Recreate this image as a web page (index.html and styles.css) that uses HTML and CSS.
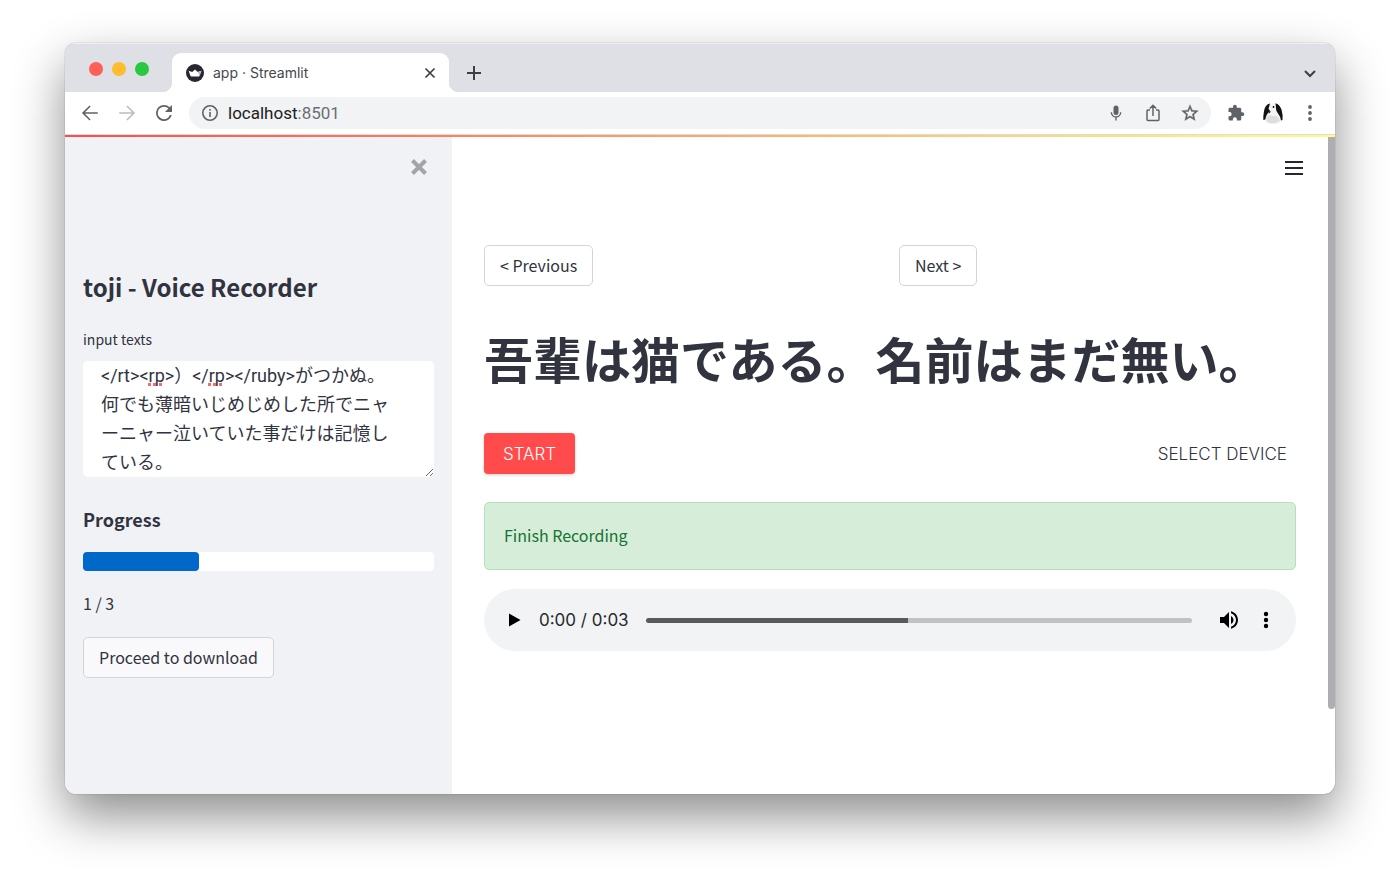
FILE: index.html
```html
<!DOCTYPE html>
<html lang="ja">
<head>
  <meta charset="UTF-8">
  <meta name="viewport" content="width=device-width, initial-scale=1.0">
  <title>app · Streamlit</title>
  <link rel="stylesheet" href="styles.css">
</head>
<body>
  <div class="window">
    <!-- Tab strip -->
    <div class="tab-strip">
      <div class="lights">
        <button class="light red" aria-label="Close window"></button>
        <button class="light yellow" aria-label="Minimize"></button>
        <button class="light green" aria-label="Zoom"></button>
      </div>
      <div class="tab">
        <svg class="favicon" viewBox="0 0 18 18"><circle cx="9" cy="9" r="9" fill="#262730"/><path d="M2.600 6.800 6.200 8 9 5.500l2.800 2.500 3.600-1.200-1.800 5q-.2.600-.8.600H5.200q-.6 0-.8-.6z" fill="#fff"/><path d="M11.800 8l3.600-1.200-1.800 5z" fill="#bbb"/></svg>
        <span class="tab-title">app · Streamlit</span>
        <button class="icon-btn" aria-label="Close tab">
          <svg width="20" height="20" viewBox="0 0 20 20" fill="none" stroke="#3c4043" stroke-width="1.700"><path d="M5.500 5.500l9 9M14.500 5.500l-9 9"/></svg>
        </button>
      </div>
      <button class="icon-btn new-tab" aria-label="New tab">
        <svg width="20" height="20" viewBox="0 0 20 20" fill="none" stroke="#3c4043" stroke-width="2"><path d="M10 3v14M3 10h14"/></svg>
      </button>
      <button class="icon-btn tab-search" aria-label="Search tabs">
        <svg width="20" height="20" viewBox="0 0 20 20" fill="none" stroke="#3c4043" stroke-width="2"><path d="M5 8l5 5 5-5"/></svg>
      </button>
    </div>

    <!-- Toolbar -->
    <div class="toolbar">
      <div class="icons">
        <button class="icon-btn" aria-label="Back"><svg width="22" height="22" viewBox="0 0 24 24" fill="#5f6368"><path d="M20.500 11.100H6.500l6.200-6.200L11.500 3.700 3.200 12l8.300 8.300 1.200-1.200-6.200-6.200h14z"/></svg></button>
        <button class="icon-btn" aria-label="Forward"><svg width="22" height="22" viewBox="0 0 24 24" fill="#babcbe"><path d="M3.500 11.100h14l-6.200-6.200 1.200-1.200 8.300 8.300-8.300 8.300-1.200-1.200 6.200-6.200h-14z"/></svg></button>
        <button class="icon-btn" aria-label="Reload"><svg width="24" height="24" viewBox="0 0 24 24" fill="#5f6368"><path d="M17.650 6.350A7.960 7.960 0 0 0 12 4a8 8 0 1 0 7.730 10h-1.900A6.200 6.200 0 1 1 12 5.800c1.700 0 3.300.7 4.400 1.800L13 11h7V4z"/></svg></button>
      </div>
      <div class="address">
        <svg class="info" width="18" height="18" viewBox="0 0 18 18" fill="none" stroke="#5f6368" stroke-width="1.600"><circle cx="9" cy="9" r="7.200"/><path d="M9 8v5M9 5v1.800"/></svg>
        <span class="url">localhost<span class="port">:8501</span></span>
        <div class="icons">
          <button class="icon-btn" aria-label="Microphone"><svg width="18" height="18" viewBox="0 0 18 18" fill="#5f6368"><rect x="6.500" y="1.500" width="5" height="9.500" rx="2.500"/><path d="M4.300 8.300a4.700 4.700 0 0 0 9.400 0M9 13v3.500" fill="none" stroke="#5f6368" stroke-width="1.400"/></svg></button>
          <button class="icon-btn" aria-label="Share"><svg width="20" height="20" viewBox="0 0 20 20" fill="none" stroke="#5f6368" stroke-width="1.500"><path d="M7 7H5q-1 0-1 1v8.500q0 1 1 1h10q1 0 1-1V8q0-1-1-1h-2M10 13V2.500M6.800 5.500L10 2.300l3.200 3.200"/></svg></button>
          <button class="icon-btn" aria-label="Bookmark"><svg width="20" height="20" viewBox="0 0 24 24" fill="#5f6368" stroke="#5f6368" stroke-width=".4"><path d="M22 9.240l-7.190-.620L12 2 9.190 8.630 2 9.240l5.460 4.730L5.820 21 12 17.270 18.180 21l-1.630-7.030zM12 15.400l-3.760 2.270 1-4.280-3.320-2.880 4.380-.380L12 6.100l1.710 4.040 4.380.380-3.320 2.880 1 4.280z"/></svg></button>
        </div>
      </div>
      <div class="icons">
        <button class="icon-btn" aria-label="Extensions"><svg width="18" height="18" viewBox="0 0 24 24" fill="#5f6368"><path d="M20.500 11H19V7c0-1.100-.9-2-2-2h-4V3.500a2.500 2.500 0 0 0-5 0V5H4c-1.100 0-2 .9-2 2v3.800h1.500a2.700 2.700 0 0 1 0 5.400H2V20c0 1.100.9 2 2 2h3.800v-1.500a2.700 2.700 0 0 1 5.400 0V22H17c1.100 0 2-.9 2-2v-4h1.500a2.500 2.500 0 0 0 0-5z"/></svg></button>
        <button class="icon-btn" aria-label="Profile">
          <svg width="22" height="22" viewBox="0 0 22 22"><path d="M5 3q6-4 12 1 4 5 3 14l-3 3Q10 24 4 20q-3-2-2-8 1-6 3-9z" fill="#f3f3f3"/><path d="M8 1.500Q3 2.500 2 9q-1 6-.7 9l2-.5Q3.500 14 6 11l2-2.500L6.500 7z" fill="#111"/><path d="M13.500 1.200q4 1 6 6.300 1.500 5 1 10.500l-1.500.5q-.5-4-3-7-2-2-2-5z" fill="#111"/><path d="M4 15q3-3 7-1 5-1 7 5-6 4-13 1z" fill="#ddd"/><circle cx="11.500" cy="5" r=".9" fill="#111"/><path d="M6 9l3 .5-2 2z" fill="#111"/></svg>
        </button>
        <button class="icon-btn" aria-label="Menu"><svg width="20" height="20" viewBox="0 0 20 20" fill="#5f6368"><circle cx="10" cy="4" r="1.900"/><circle cx="10" cy="10" r="1.900"/><circle cx="10" cy="16" r="1.900"/></svg></button>
      </div>
    </div>

    <!-- Streamlit app -->
    <div class="app">
      <aside class="sidebar">
        <button class="icon-btn close-sidebar" aria-label="Close sidebar">
          <svg width="18" height="18" viewBox="0 0 18 18" fill="none" stroke="#a3a4a9" stroke-width="4"><path d="M2.500 2.500l13 13M15.500 2.500l-13 13"/></svg>
        </button>
        <h1>toji - Voice Recorder</h1>
        <label for="texts">input texts</label>
        <div class="text-box">
          <textarea id="texts" rows="4" spellcheck="false">&lt;/rt&gt;&lt;rp&gt;）&lt;/rp&gt;&lt;/ruby&gt;がつかぬ。
何でも薄暗いじめじめした所でニャーニャー泣いていた事だけは記憶している。</textarea>
          <span class="misspelled first"></span>
          <span class="misspelled second"></span>
        </div>
        <h2 id="progress-title">Progress</h2>
        <progress value="33" max="100" aria-labelledby="progress-title"></progress>
        <p class="count">1 / 3</p>
        <button class="btn">Proceed to download</button>
      </aside>

      <main class="main">
        <button class="icon-btn main-menu" aria-label="Main menu">
          <svg width="18" height="16" viewBox="0 0 18 16" stroke="#262730" stroke-width="2"><path d="M0 2h18M0 8h18M0 14h18"/></svg>
        </button>
        <div class="pager">
          <div><button class="btn">&lt; Previous</button></div>
          <div><button class="btn">Next &gt;</button></div>
        </div>
        <p class="sentence">吾輩は猫である。名前はまだ無い。</p>
        <div class="recorder">
          <button class="start">START</button>
          <button class="device">SELECT DEVICE</button>
        </div>
        <div class="success" role="status">Finish Recording</div>
        <div class="player">
          <button class="icon-btn play" aria-label="Play"><svg width="20" height="20" viewBox="0 0 20 20"><path d="M5 3.500v13L16.500 10z"/></svg></button>
          <span class="time">0:00 / 0:03</span>
          <input class="seek" type="range" min="0" max="100" value="48" aria-label="Seek">
          <button class="icon-btn" aria-label="Mute"><svg width="24" height="24" viewBox="0 0 24 24"><path d="M3 9v6h4l5 5V4L7 9zm13.500 3c0-1.770-1.020-3.290-2.500-4.030v8.050c1.480-.730 2.500-2.250 2.500-4.020zM14 3.230v2.060c2.890.860 5 3.540 5 6.710s-2.110 5.850-5 6.710v2.060c4.010-.910 7-4.490 7-8.770s-2.990-7.860-7-8.770z"/></svg></button>
          <button class="icon-btn" aria-label="More options"><svg width="20" height="20" viewBox="0 0 20 20"><circle cx="10" cy="4" r="2.200"/><circle cx="10" cy="10" r="2.200"/><circle cx="10" cy="16" r="2.200"/></svg></button>
        </div>
        <div class="scrollbar"></div>
      </main>
    </div>
  </div>
</body>
</html>
```
FILE: styles.css
```css
* { margin: 0; padding: 0; box-sizing: border-box; }
body {
  display: flex;
  min-height: 100vh;
  padding: 43px 65px 85px;
  background: #fff;
  color: #31333f;
  font-family: "Noto Sans CJK JP", sans-serif;
  font-size: 16px;
  line-height: 24px;
}
button, textarea, input { font: inherit; color: inherit; }
button { border: none; background: none; cursor: pointer; }
svg { display: block; }

.window {
  flex: 1;
  display: flex;
  flex-direction: column;
  border-radius: 11px;
  overflow: hidden;
  background: #fff;
  box-shadow: 0 0 1px rgba(0,0,0,0.6), 0 22px 50px rgba(0,0,0,0.45);
}
.icon-btn {
  display: flex;
  align-items: center;
  justify-content: center;
  width: 20px;
  height: 20px;
  flex-shrink: 0;
}
.icon-btn svg { flex-shrink: 0; }

/* Tab strip */
.tab-strip {
  display: flex;
  align-items: center;
  height: 49px;
  padding: 9px 15px 0 24px;
  background: #dee0e5;
  border-top: 1px solid #eeeff2;
}
.lights {
  display: flex;
  gap: 9px;
  margin-right: 23px;
  padding-bottom: 7px;
}
.light { width: 14px; height: 14px; border-radius: 50%; }
.red { background: #fe5f57; }
.yellow { background: #febc2e; }
.green { background: #28c840; }
.tab {
  position: relative;
  display: flex;
  align-items: center;
  width: 277px;
  height: 100%;
  padding: 0 9px 0 14px;
  background: #fff;
  border-radius: 9px 9px 0 0;
}
/* Curved feet of the active tab */
.tab::before, .tab::after {
  content: "";
  position: absolute;
  bottom: 0;
  width: 9px;
  height: 9px;
}
.tab::before { right: 100%; background: radial-gradient(circle at 0 0, transparent 9px, #fff 9px); }
.tab::after { left: 100%; background: radial-gradient(circle at 100% 0, transparent 9px, #fff 9px); }
.favicon { width: 18px; height: 18px; margin-right: 9px; }
.tab-title { flex: 1; font: 14px/20px Inter, sans-serif; color: #45484d; }
.new-tab { margin-left: 15px; }
.tab-search { margin-left: auto; }

/* Toolbar */
.toolbar {
  display: flex;
  align-items: center;
  gap: 15px;
  height: 43px;
  padding: 0 15px;
  border-bottom: 1px solid #dadce0;
}
.icons { display: flex; gap: 17px; }
.address {
  flex: 1;
  display: flex;
  align-items: center;
  height: 32px;
  padding: 0 11px 0 12px;
  background: #f1f3f4;
  border-radius: 16px;
}
.info { margin-right: 9px; }
.url { flex: 1; font: 17px/24px Roboto, sans-serif; color: #202124; }
.port { color: #6b6f73; }

/* App */
.app {
  flex: 1;
  display: flex;
  border-top: 2px solid;
  border-image: linear-gradient(90deg, #ff4b4b, #ff8c60 36%, #ffd377 74%, #fffd80) 1;
}
.sidebar {
  display: flex;
  flex-direction: column;
  align-items: flex-start;
  width: 387px;
  padding: 20px 18px;
  background: #f0f2f6;
}
.close-sidebar { align-self: flex-end; margin: 0 5px 92px 0; }
h1 { font-size: 24px; line-height: 36px; margin-bottom: 24px; }
.sidebar label { font-size: 14px; line-height: 20px; margin-bottom: 12px; }
.text-box { position: relative; width: 100%; margin-bottom: 28px; }
textarea {
  display: block;
  width: 100%;
  padding: 0 30px 0 18px;
  border: none;
  border-radius: 5px;
  background: #fff;
  font-family: Roboto, "Noto Sans CJK JP", sans-serif;
  font-size: 18px;
  line-height: 29px;
  line-break: anywhere;
  overflow: hidden;
}
.misspelled {
  position: absolute;
  top: 22px;
  width: 14px;
  border-top: 3px dotted #f56c6c;
}
.first { left: 65px; }
.second { left: 125px; }
h2 { font-size: 18px; line-height: 28px; margin-bottom: 19px; }
progress {
  appearance: none;
  display: block;
  width: 100%;
  height: 19px;
  margin-bottom: 20px;
  border: none;
}
progress::-webkit-progress-bar { background: #fff; border-radius: 4px; }
progress::-webkit-progress-value { background: #0068c9; border-radius: 4px; }
.count { margin-bottom: 22px; }
.btn {
  height: 41px;
  padding: 0 15px 2px;
  border: 1px solid #d3d4d8;
  border-radius: 5px;
  background: #f9f9fb;
}

.main {
  position: relative;
  flex: 1;
  padding: 21px 39px 40px 32px;
}
.main-menu { margin: 0 -8px 67px auto; }
.pager {
  display: grid;
  grid-template-columns: 1fr 1fr;
  gap: 18px;
  margin-bottom: 36px;
}
.main .btn { background: #fff; }
.sentence {
  font-size: 49px;
  font-weight: bold;
  line-height: 72px;
  margin-bottom: 39px;
}
.recorder {
  display: flex;
  justify-content: space-between;
  margin-bottom: 28px;
  font-family: Inter, sans-serif;
  font-size: 17px;
  font-weight: 300;
}
.start {
  height: 41px;
  padding: 0 19px;
  border-radius: 4px;
  background: #ff4b4b;
  color: #fff;
  box-shadow: 0 1px 3px rgba(0,0,0,0.2);
}
.device { padding: 0 9px; }
.success {
  padding: 20px 19px 22px;
  margin-bottom: 19px;
  border: 1px solid #b4e1bb;
  border-radius: 5px;
  background: #d6eed9;
  color: #177233;
}
.player {
  display: flex;
  align-items: center;
  gap: 17px;
  height: 62px;
  padding: 0 20px 0 22px;
  border-radius: 31px;
  background: #f1f3f4;
}
.play { width: 16px; }
.time { font: 17px/24px Inter, sans-serif; color: #27292b; }
.seek {
  appearance: none;
  flex: 1;
  height: 5px;
  margin-right: 10px;
  border-radius: 3px;
  background: linear-gradient(90deg, #5a5a5a 48%, #c1c2c3 48%);
}
.seek::-webkit-slider-thumb { appearance: none; width: 1px; height: 5px; }
.scrollbar {
  position: absolute;
  top: 0;
  right: 0;
  width: 7px;
  height: 87%;
  background: #adadb2;
  border-radius: 0 0 4px 4px;
}
```
